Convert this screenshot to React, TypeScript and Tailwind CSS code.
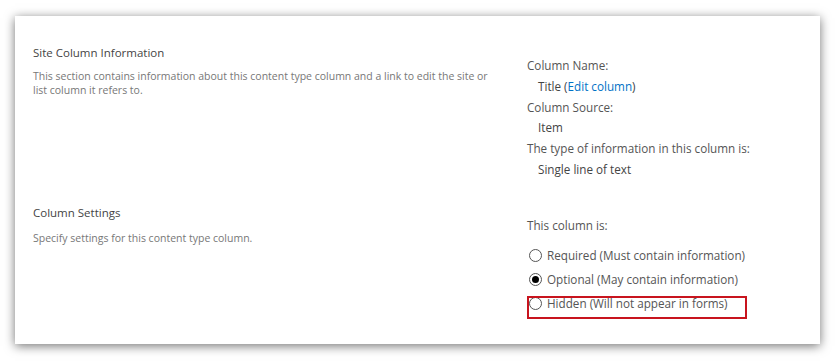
import React from 'react';

const Radio: React.FC<{ checked?: boolean }> = ({ checked }) => (
  <span className="flex h-[13px] w-[13px] items-center justify-center rounded-full border border-[#555] bg-white">
    {checked && <span className="h-[7px] w-[7px] rounded-full bg-black" />}
  </span>
);

const App: React.FC = () => {
  const font = { fontFamily: '"Open Sans", "Noto Sans", sans-serif' };

  const options = [
    { label: 'Required (Must contain information)', checked: false },
    { label: 'Optional (May contain information)', checked: true },
    { label: 'Hidden (Will not appear in forms)', checked: false, marked: true },
  ];

  return (
    <div className="h-[363px] w-[840px] bg-white pl-[15px] pt-[16px]" style={font}>
      <div className="h-[328px] w-[805px] bg-white pt-[29px] shadow-[0_2px_10px_rgba(0,0,0,0.55)]">
        {/* Site column information */}
        <div className="flex">
          <div className="w-[512px] pl-[18px]">
            <h2 className="text-[11.5px] leading-[16px] text-[#444]">Site Column Information</h2>
            <p className="mt-[9px] w-[470px] text-[10.5px] leading-[13.5px] text-[#777]">
              This section contains information about this content type column and a link to edit the site or list column it refers to.
            </p>
          </div>
          <div className="mt-[10px] text-[11.7px] leading-[20.8px] text-[#555]">
            <div>Column Name:</div>
            <div className="pl-[11px] text-[#444]">
              Title (<a className="text-[#0072c6]">Edit column</a>)
            </div>
            <div>Column Source:</div>
            <div className="pl-[11px] text-[#444]">Item</div>
            <div>The type of information in this column is:</div>
            <div className="pl-[11px] text-[#444]">Single line of text</div>
          </div>
        </div>

        {/* Column settings */}
        <div className="mt-[25px] flex">
          <div className="w-[512px] pl-[18px]">
            <h2 className="text-[11.5px] leading-[16px] text-[#444]">Column Settings</h2>
            <p className="mt-[10px] text-[10.5px] leading-[14px] text-[#777]">
              Specify settings for this content type column.
            </p>
          </div>
          <div className="mt-[10px] text-[11.7px] text-[#555]">
            <div className="leading-[21px]">This column is:</div>
            <div className="mt-[8px] flex flex-col">
              {options.map((o, i) => (
                <div key={i} className="relative flex h-[24px] items-center gap-[5px] pl-[2px]">
                  <Radio checked={o.checked} />
                  <span>{o.label}</span>
                  {o.marked && (
                    <span className="absolute left-0 top-[4px] h-[23px] w-[220px] border-2 border-[#c8141e]" />
                  )}
                </div>
              ))}
            </div>
          </div>
        </div>
      </div>
    </div>
  );
};

export default App;
